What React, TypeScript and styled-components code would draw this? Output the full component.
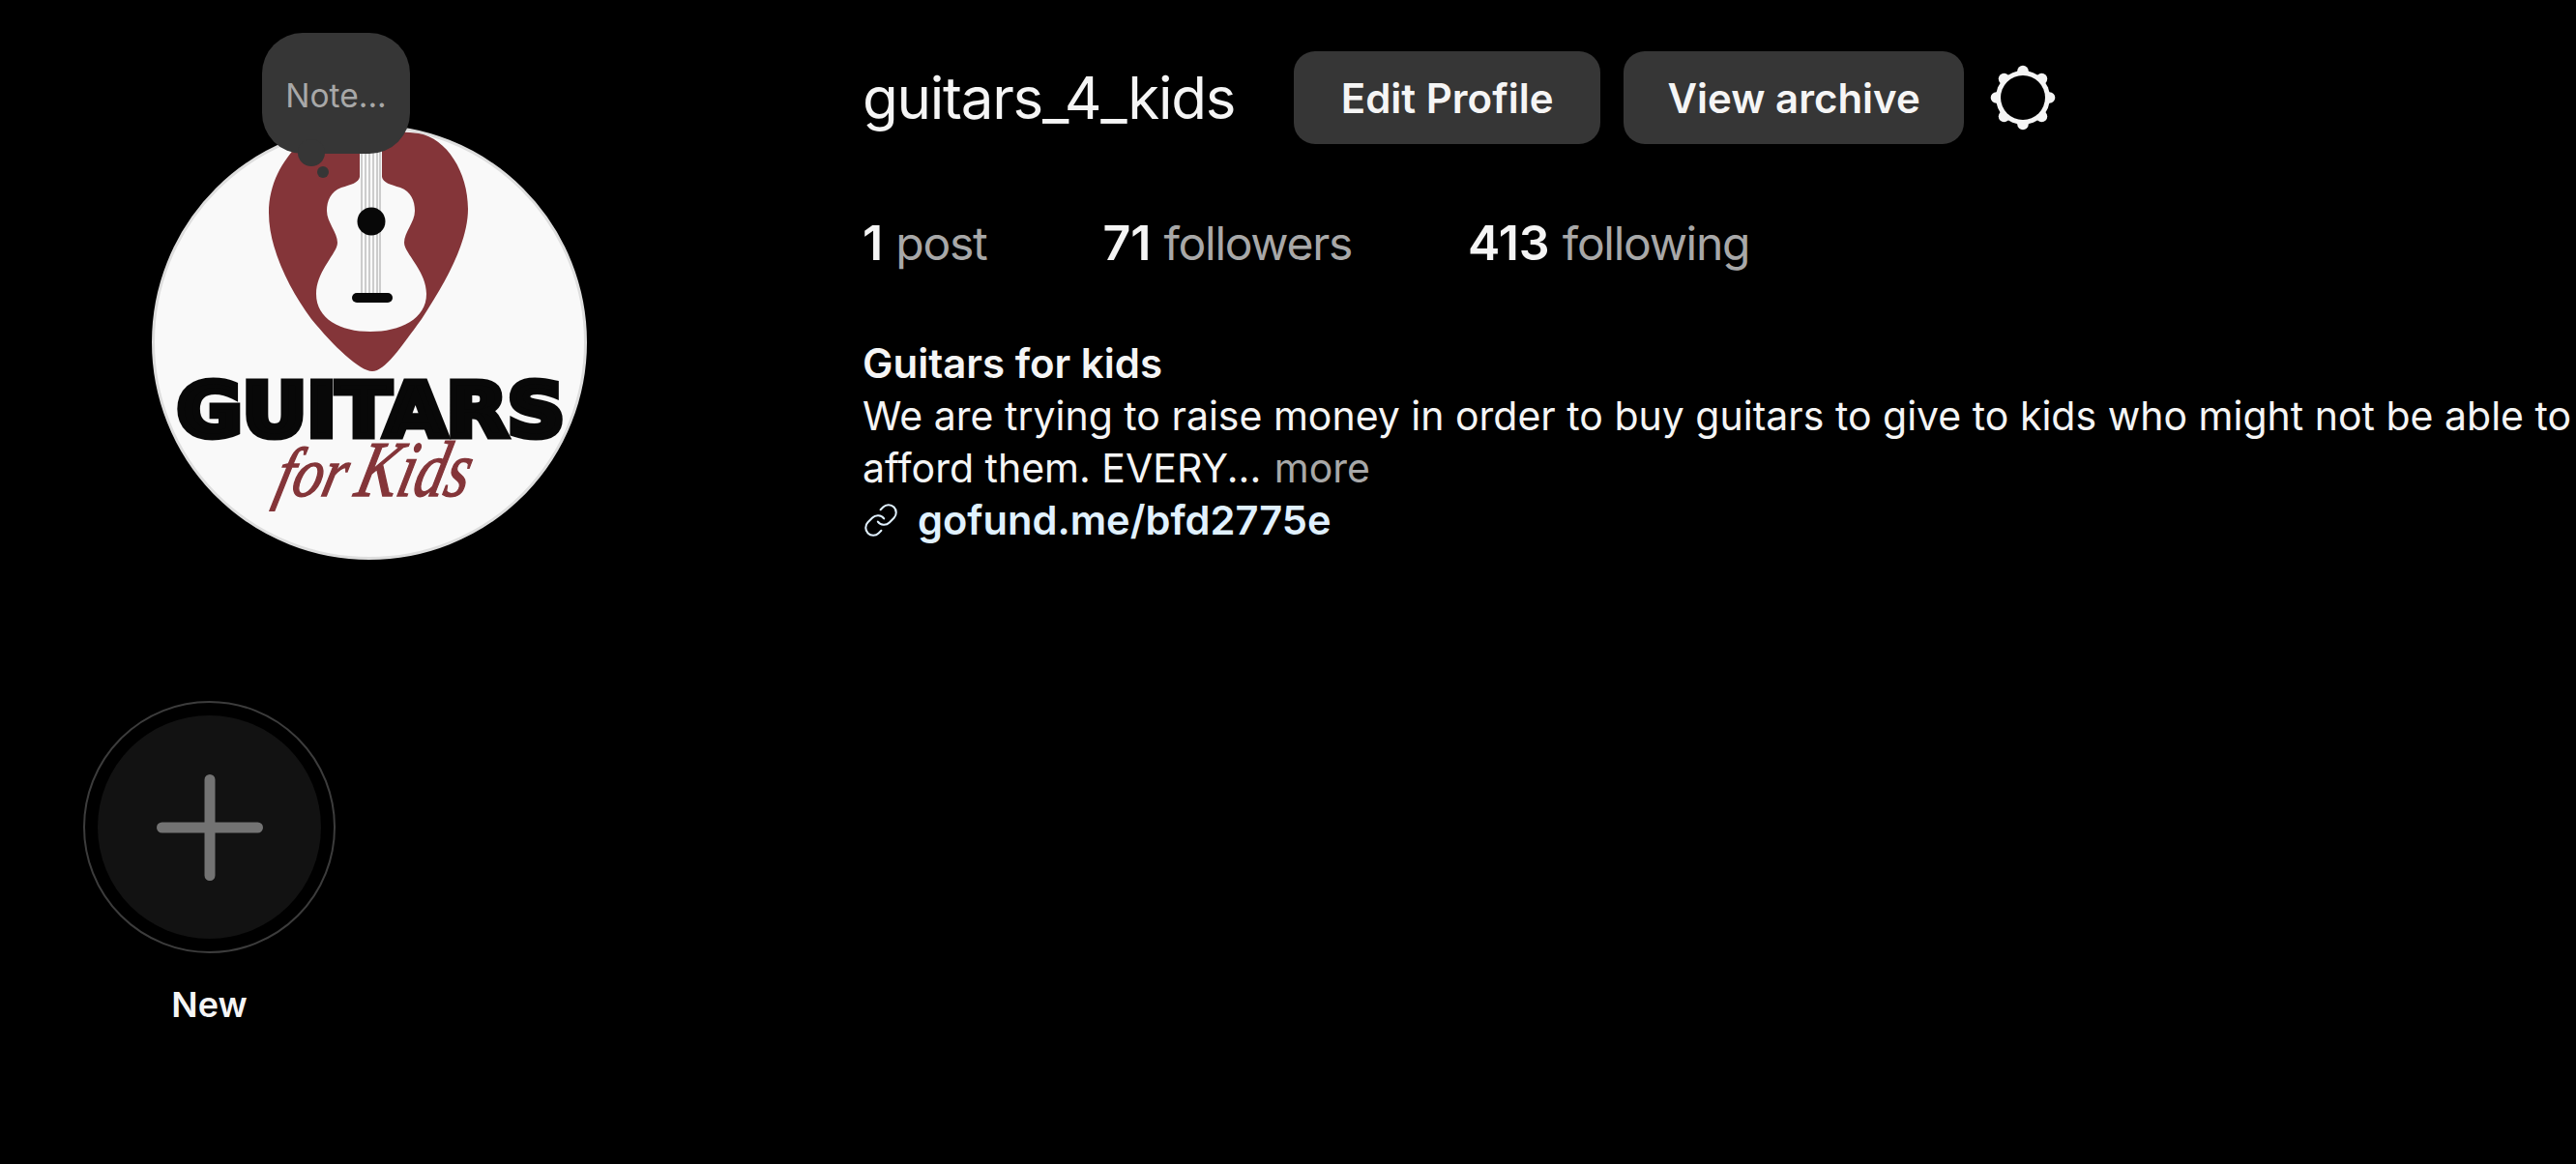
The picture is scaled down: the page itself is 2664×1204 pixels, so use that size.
import React from "react";
import styled, { createGlobalStyle } from "styled-components";
import { Link as LinkIcon } from "lucide-react";

const Global = createGlobalStyle`
  html, body { margin: 0; padding: 0; background: #000; }
  body { font-family: Inter, "Noto Sans", "Liberation Sans", sans-serif; color: #f5f5f5; }
`;

const Page = styled.main`
  width: 2664px;
  height: 1204px;
  background: #000;
  overflow: hidden;
  display: flex;
  flex-direction: column;
`;

const Header = styled.header`
  display: flex;
  align-items: flex-start;
  padding: 53px 0 0 157px;
`;

const AvatarWrap = styled.div`
  position: relative;
  flex: none;
  width: 450px;
  height: 450px;
  margin-top: 76px;
  margin-right: 285px;
`;

const AvatarSvg = styled.svg`
  display: block;
  width: 450px;
  height: 450px;
`;

const NoteBubble = styled.div`
  position: absolute;
  left: 114px;
  top: -95px;
  width: 153px;
  height: 125px;
  border-radius: 42px;
  background: #363636;
  color: #a8a8a8;
  font-size: 33.5px;
  line-height: 38px;
  padding-top: 46px;
  box-sizing: border-box;
  text-align: center;

  &::before {
    content: "";
    position: absolute;
    left: 37px;
    top: 110px;
    width: 28px;
    height: 28px;
    border-radius: 50%;
    background: #363636;
  }
  &::after {
    content: "";
    position: absolute;
    left: 57px;
    top: 138px;
    width: 12px;
    height: 12px;
    border-radius: 50%;
    background: #363636;
  }
`;

const Info = styled.section`
  display: flex;
  flex-direction: column;
  flex: 1;
  min-width: 0;
`;

const TitleRow = styled.div`
  display: flex;
  align-items: center;
  height: 96px;
`;

const Username = styled.h2`
  margin: 0 61px 0 0;
  font-size: 60px;
  font-weight: 400;
  line-height: 72px;
  letter-spacing: -1.25px;
  color: #f5f5f5;
`;

const ActionButton = styled.button<{ $width: number }>`
  width: ${(p) => p.$width}px;
  height: 96px;
  padding: 0;
  margin-right: 24px;
  border: 0;
  border-radius: 22px;
  background: #363636;
  color: #f5f5f5;
  font-family: inherit;
  font-size: 42px;
  font-weight: 600;
`;

const GearSvg = styled.svg`
  display: block;
  width: 70px;
  height: 70px;
  margin-left: 2px;
`;

const Stats = styled.ul`
  display: flex;
  gap: 120px;
  list-style: none;
  margin: 72px 0 0;
  padding: 0;
  font-size: 48px;
  line-height: 60px;
  letter-spacing: -1.3px;
  color: #a8a8a8;

  b {
    font-size: 50px;
    font-weight: 600;
    letter-spacing: 0;
    margin-right: 1px;
    color: #f5f5f5;
  }
`;

const Bio = styled.div`
  margin-top: 67px;
  font-size: 41px;
  line-height: 54px;
  color: #f5f5f5;
`;

const BioName = styled.div`
  font-size: 42px;
  font-weight: 600;
`;

const More = styled.span`
  margin-left: 2px;
  color: #a8a8a8;
`;

const BioLink = styled.a`
  display: flex;
  align-items: center;
  gap: 19px;
  color: #e0f1ff;
  font-size: 41.6px;
  font-weight: 600;
`;

const Highlights = styled.section`
  display: flex;
  padding: 146px 0 0 86px;
`;

const Highlight = styled.div`
  display: flex;
  flex-direction: column;
  align-items: center;
  width: 261px;
`;

const Ring = styled.div`
  box-sizing: border-box;
  width: 261px;
  height: 261px;
  padding: 13px;
  border: 2px solid #3c3c3c;
  border-radius: 50%;
`;

const Disc = styled.div`
  display: flex;
  align-items: center;
  justify-content: center;
  width: 100%;
  height: 100%;
  border-radius: 50%;
  background: #121212;
  color: #737373;
`;

const HighlightLabel = styled.div`
  margin-top: 31px;
  font-size: 36px;
  font-weight: 600;
  line-height: 44px;
  color: #f5f5f5;
`;

const Gear = () => {
  const bumps = Array.from({ length: 8 }, (_, i) => (i * Math.PI) / 4);
  return (
    <GearSvg viewBox="-35 -35 70 70">
      <circle r="28" fill="#f5f5f5" />
      {bumps.map((a) => (
        <circle key={a} cx={27.5 * Math.cos(a)} cy={27.5 * Math.sin(a)} r="5.8" fill="#f5f5f5" />
      ))}
      <circle r="23" fill="#000" />
    </GearSvg>
  );
};

const Logo = () => (
  <AvatarSvg viewBox="157 129 450 450">
    <circle cx="382" cy="354" r="223.5" fill="#f9f9f9" stroke="#dedede" strokeWidth="3" />
    <path
      fill="#843539"
      d="M433 138C462 143 484 178 484 216C484 250 462 290 436 330C414 360 398 384 385 384C372 384 345 358 322 330C300 300 278 258 278 220C278 190 292 166 310 148C340 134 400 134 433 138Z"
    />
    <path
      fill="#f9f9f9"
      d="M372 136H395V183C396 189 404 191 414 194C425 198 429 208 429 218C429 230 418 240 418 251C418 262 441 280 441 304C441 330 414 343 383 343C352 343 327 330 327 304C327 280 349 262 349 251C349 240 338 230 338 218C338 208 342 198 353 194C363 191 371 189 372 183Z"
    />
    {[374, 378, 382, 386, 390, 393].map((x) => (
      <line key={x} x1={x} y1="136" x2={x} y2="304" stroke="#a0a0a0" strokeWidth="1" />
    ))}
    <ellipse cx="384" cy="229" rx="14.5" ry="14.5" fill="#080808" />
    <rect x="364" y="303" width="42" height="10" rx="5" fill="#080808" />
    <text
      x="183"
      y="451"
      textLength="401"
      lengthAdjust="spacingAndGlyphs"
      fontFamily="'DejaVu Sans', sans-serif"
      fontWeight="700"
      fontSize="76"
      fill="#080808"
      stroke="#080808"
      strokeWidth="7"
    >
      GUITARS
    </text>
    <g transform="translate(0 513) skewX(-14)">
      <text
        x="282"
        y="0"
        textLength="72"
        lengthAdjust="spacingAndGlyphs"
        fontFamily="'Liberation Serif', serif"
        fontStyle="italic"
        fontSize="72"
        fill="#843539"
        stroke="#843539"
        strokeWidth="1.5"
      >
        for
      </text>
      <text
        x="365"
        y="0"
        textLength="116"
        lengthAdjust="spacingAndGlyphs"
        fontFamily="'Liberation Serif', serif"
        fontStyle="italic"
        fontSize="82"
        fill="#843539"
        stroke="#843539"
        strokeWidth="1.5"
      >
        Kids
      </text>
    </g>
  </AvatarSvg>
);

export default function App() {
  return (
    <Page>
      <Global />
      <Header>
        <AvatarWrap>
          <Logo />
          <NoteBubble>Note...</NoteBubble>
        </AvatarWrap>
        <Info>
          <TitleRow>
            <Username>guitars_4_kids</Username>
            <ActionButton $width={317}>Edit Profile</ActionButton>
            <ActionButton $width={352}>View archive</ActionButton>
            <Gear />
          </TitleRow>
          <Stats>
            <li><b>1</b> post</li>
            <li><b>71</b> followers</li>
            <li><b>413</b> following</li>
          </Stats>
          <Bio>
            <BioName>Guitars for kids</BioName>
            <div>
              We are trying to raise money in order to buy guitars to give to kids who might not be able to afford them. EVERY... <More>more</More>
            </div>
            <BioLink>
              <LinkIcon size={38} strokeWidth={1.3} />
              gofund.me/bfd2775e
            </BioLink>
          </Bio>
        </Info>
      </Header>
      <Highlights>
        <Highlight>
          <Ring>
            <Disc>
              <svg width="110" height="110" viewBox="0 0 110 110">
                <path d="M55 5.5V104.5M5.5 55H104.5" stroke="currentColor" strokeWidth="11" strokeLinecap="round" />
              </svg>
            </Disc>
          </Ring>
          <HighlightLabel>New</HighlightLabel>
        </Highlight>
      </Highlights>
    </Page>
  );
}
